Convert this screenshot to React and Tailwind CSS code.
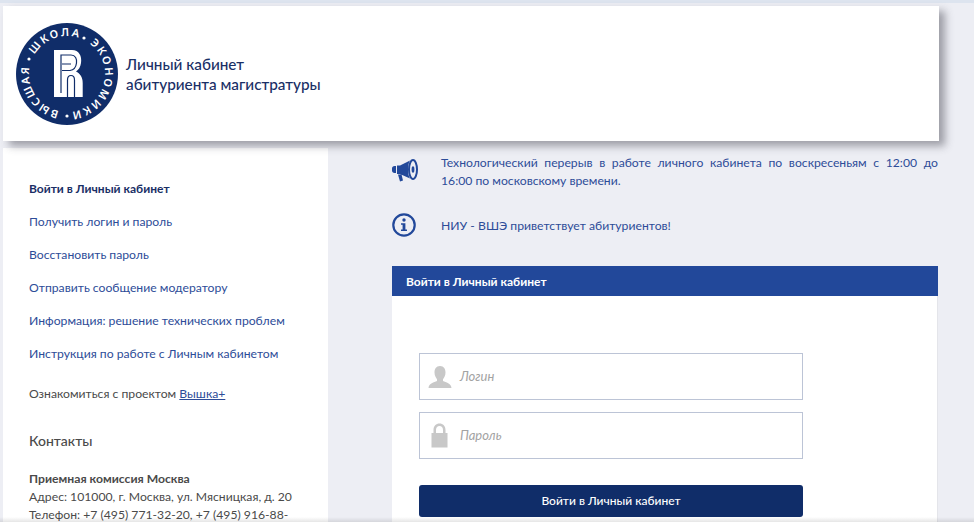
import React from 'react';

const SIDE_LINKS = [
    'Получить логин и пароль',
    'Восстановить пароль',
    'Отправить сообщение модератору',
    'Информация: решение технических проблем',
    'Инструкция по работе с Личным кабинетом',
];

const Logo = () => (
    <svg width="102" height="102" viewBox="0 0 102 102" className="shrink-0">
        <defs>
            <path id="ringTop" d="M 13 51 a 38 38 0 1 1 76 0 a 38 38 0 1 1 -76 0" />
        </defs>
        <circle cx="51" cy="51" r="51" fill="#102d69" />
        <text fill="#fff" fontSize="11" fontWeight="600" fontFamily="'Noto Sans', sans-serif">
            <textPath href="#ringTop" startOffset="8.5%" textLength="51">ШКОЛА</textPath>
        </text>
        <text fill="#fff" fontSize="11" fontWeight="600" fontFamily="'Noto Sans', sans-serif">
            <textPath href="#ringTop" startOffset="35.2%" textLength="90">ЭКОНОМИКИ</textPath>
        </text>
        <text fill="#fff" fontSize="11" fontWeight="600" fontFamily="'Noto Sans', sans-serif" transform="rotate(90 51 51)">
            <textPath href="#ringTop" startOffset="53.4%" textLength="58">ВЫСШАЯ</textPath>
        </text>
        <circle cx="13" cy="36" r="1.6" fill="#fff" />
        <circle cx="68" cy="15" r="1.6" fill="#fff" />
        <circle cx="51" cy="93" r="1.6" fill="#fff" />
        {/* R mark */}
        <path fill="#fff" d="M38 27H56C63 27 66 33 65 40C64.5 44 62.5 47 60 48.5C64 50.5 66.7 54 66.7 60V74H38Z" />
        <path fill="none" stroke="#102d69" strokeWidth="1.2" d="M45 70V32H55C59.5 32 61 36 60.5 40C60 44 58 47 54 47.5H46" />
        <path fill="none" stroke="#102d69" strokeWidth="1.2" d="M46 41H55M51.5 74V57C51.5 54 53 52.5 55 52.5C57 52.5 58.5 54 58.5 57V74" />
    </svg>
);

const Megaphone = () => (
    <svg width="26" height="24" viewBox="0 0 26 24" className="shrink-0">
        <path fill="#22489a" d="M0 9.5C0 8 1 7 2.5 7H4V14H2.5C1 14 0 13 0 11.5ZM5 6.5H8L18 1.5C16.5 4 16 7 16 10.5C16 14 16.5 17 18 19.5L8 15H5ZM6 15.5H9.5L11 21.5L8 22.5Z" />
        <ellipse cx="21" cy="10.5" rx="4" ry="9.5" fill="none" stroke="#22489a" strokeWidth="2" />
        <ellipse cx="21" cy="10.5" rx="1.4" ry="3.2" fill="#22489a" />
    </svg>
);

const InfoIcon = () => (
    <svg width="24" height="24" viewBox="0 0 24 24" className="shrink-0">
        <circle cx="12" cy="12" r="10.7" fill="none" stroke="#22489a" strokeWidth="2.2" />
        <circle cx="12" cy="7" r="1.7" fill="#22489a" />
        <path fill="#22489a" d="M9 10.2H13.4V16.4H15V18H9V16.4H10.6V11.8H9Z" />
    </svg>
);

const UserIcon = () => (
    <svg width="24" height="22" viewBox="0 0 24 22" className="shrink-0">
        <path fill="#c8c8c8" d="M12 0C16 0 17.5 3 17.5 6.5C17.5 9.5 16 12 15 13.2V15C18 16.5 23 17 23.5 22H0.5C1 17 6 16.5 9 15V13.2C8 12 6.5 9.5 6.5 6.5C6.5 3 8 0 12 0Z" />
    </svg>
);

const LockIcon = () => (
    <svg width="17" height="25" viewBox="0 0 17 25" className="shrink-0">
        <path fill="#c8c8c8" fillRule="evenodd" d="M2.5 10V7C2.5 3 5 0.5 8.5 0.5C12 0.5 14.5 3 14.5 7V10H16.5V24.5H0.5V10ZM5 10H12V7C12 4.5 10.5 3 8.5 3C6.5 3 5 4.5 5 7Z" />
    </svg>
);

const Field = ({ icon, label, pad }) => (
    <div className="flex h-[47px] items-center border border-[#bcc4d6] bg-white">
        <div className={pad}>{icon}</div>
        <span className="text-[13px] italic text-[#a3a3a3]">{label}</span>
    </div>
);

export default function App() {
    return (
        <div className="relative h-[522px] w-[974px] overflow-hidden bg-[#edeef4] font-['Lato',sans-serif] text-[12.2px]">
            <div className="h-[3px] bg-[#dde4ef]" />

            {/* Header */}
            <header className="relative z-10 ml-[3px] mt-[3px] flex h-[135px] w-[936px] items-center bg-white pl-[13px] shadow-[6px_5px_8px_rgba(60,60,70,0.45)]">
                <Logo />
                <div className="ml-[8px] text-[15.3px] font-medium leading-[20px] text-[#1a2f66]">
                    <div>Личный кабинет</div>
                    <div>абитуриента магистратуры</div>
                </div>
            </header>

            <div className="mt-[7px] flex">
                {/* Sidebar */}
                <aside className="ml-[3px] h-[374px] w-[325px] bg-white pl-[26px] pt-[32px]">
                    <div className="h-[17px] text-xs font-bold leading-[17px] text-[#1a2f66]">Войти в Личный кабинет</div>
                    <nav className="mt-[16px] flex flex-col gap-[16px] text-[#2d4c98]">
                        {SIDE_LINKS.map((label) => (
                            <a key={label} className="h-[17px] leading-[17px]">{label}</a>
                        ))}
                    </nav>
                    <div className="mt-[23px] leading-[17px] text-[#4a4a4a]">
                        Ознакомиться с проектом <span className="text-[#2d4c98] underline">Вышка+</span>
                    </div>
                    <h2 className="mt-[29px] text-[14px] font-medium leading-[20px] text-[#4a4a4a]">Контакты</h2>
                    <div className="mt-[19px] leading-[18px] text-[#4a4a4a]">
                        <div className="font-bold">Приемная комиссия Москва</div>
                        <div>Адрес: 101000, г. Москва, ул. Мясницкая, д. 20</div>
                        <div>Телефон: +7 (495) 771-32-20, +7 (495) 916-88-</div>
                    </div>
                </aside>

                {/* Main */}
                <main className="ml-[64px] w-[546px]">
                    <div className="flex h-[48px] items-start">
                        <div className="mt-[11px] w-[49px]"><Megaphone /></div>
                        <div className="mt-[6px] w-[497px] leading-[18px] text-[#2d4c98]">
                            <p className="text-justify [text-align-last:justify]">Технологический перерыв в работе личного кабинета по воскресеньям с 12:00 до</p>
                            <p>16:00 по московскому времени.</p>
                        </div>
                    </div>
                    <div className="mt-[17px] flex items-center">
                        <div className="w-[49px]"><InfoIcon /></div>
                        <p className="mt-[2px] leading-[18px] text-[#2d4c98]">НИУ - ВШЭ приветствует абитуриентов!</p>
                    </div>
                    <div className="mt-[29px] flex h-[30px] items-center bg-[#22489a] pl-[14px] pt-[2px] text-xs font-bold text-white">
                        Войти в Личный кабинет
                    </div>
                    <div className="h-[300px] border-r border-[#e4e5ea] bg-white px-[27px] pt-[57px]">
                        <div className="flex w-[384px] flex-col gap-[12px]">
                            <Field icon={<UserIcon />} label="Логин" pad="ml-[8px] mr-[8px]" />
                            <Field icon={<LockIcon />} label="Пароль" pad="ml-[11px] mr-[12px]" />
                        </div>
                        <button className="mt-[26px] h-[32px] w-[384px] rounded-[3px] bg-[#102d69] text-xs font-medium text-white">
                            Войти в Личный кабинет
                        </button>
                    </div>
                </main>
            </div>

            {/* bottom fade */}
            <div className="absolute inset-x-0 bottom-0 h-[5px] bg-gradient-to-t from-black/10 to-transparent" />
        </div>
    );
}
